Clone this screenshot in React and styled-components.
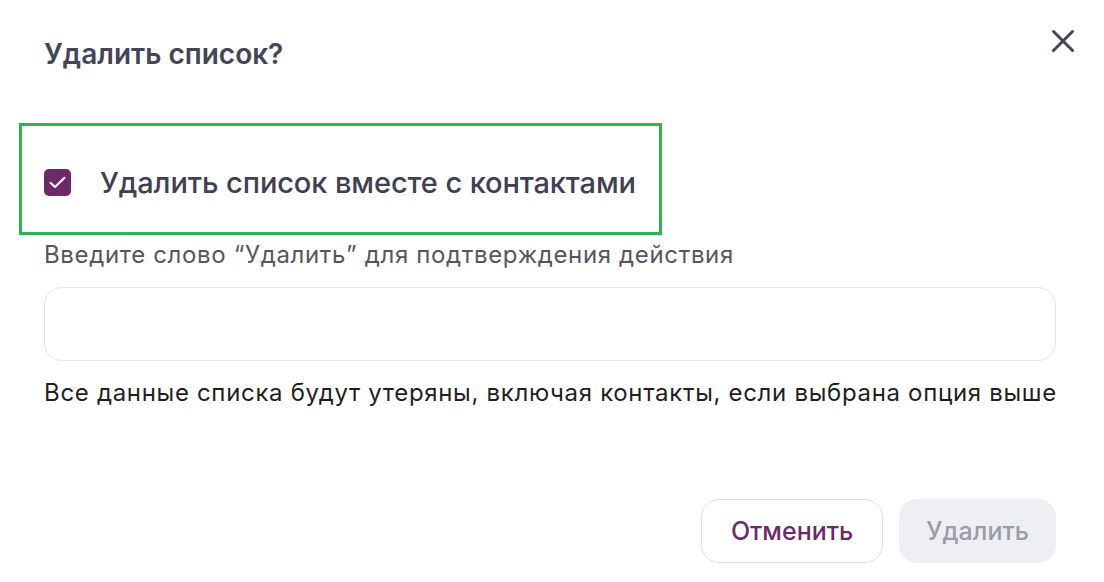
import React, {useState} from 'react'
import styled, {createGlobalStyle} from 'styled-components'

const GlobalStyle = createGlobalStyle`
  html, body {
    margin: 0;
    padding: 0;
    background: #fff;
  }
  body {
    font-family: Inter, "Noto Sans", sans-serif;
    -webkit-font-smoothing: antialiased;
  }
`

export default function App() {
  const [withContacts, setWithContacts] = useState(true)
  const [word, setWord] = useState('')

  return (
    <>
      <GlobalStyle />
      <Modal>
        <Header>
          <Title>Удалить список?</Title>
          <CloseButton aria-label="Закрыть">
            <svg width="24" height="24" viewBox="0 0 24 24" fill="none">
              <path
                d="M2.5 2.5L21.5 21.5M21.5 2.5L2.5 21.5"
                stroke="#454559"
                strokeWidth="3"
                strokeLinecap="round"
              />
            </svg>
          </CloseButton>
        </Header>

        <Highlight>
          <CheckRow onClick={() => setWithContacts(!withContacts)}>
            <Checkbox checked={withContacts}>
              {withContacts && (
                <svg width="17" height="13" viewBox="0 0 17 13" fill="none">
                  <path
                    d="M1.5 6.8L6 11L15.5 1.8"
                    stroke="#fff"
                    strokeWidth="2"
                    strokeLinecap="round"
                    strokeLinejoin="round"
                  />
                </svg>
              )}
            </Checkbox>
            <CheckLabel>Удалить список вместе с контактами</CheckLabel>
          </CheckRow>
        </Highlight>

        <Field>
          <FieldLabel>Введите слово “Удалить” для подтверждения действия</FieldLabel>
          <Input value={word} onChange={e => setWord(e.target.value)} />
          <Hint>
            Все данные списка будут утеряны, включая контакты, если выбрана
            опция выше
          </Hint>
        </Field>

        <Footer>
          <Button>Отменить</Button>
          <Button primary disabled={word !== 'Удалить'}>
            Удалить
          </Button>
        </Footer>
      </Modal>
    </>
  )
}

const Modal = styled.div`
  width: 1104px;
  height: 582px;
  box-sizing: border-box;
  padding: 28px 48px 19px 44px;
  display: flex;
  flex-direction: column;
`

const Header = styled.header`
  display: flex;
  justify-content: space-between;
  align-items: flex-start;
  height: 95px;
`

const Title = styled.h2`
  margin: 9px 0 0;
  font-size: 28px;
  line-height: 34px;
  font-weight: 600;
  color: #454559;
`

const CloseButton = styled.button`
  border: 0;
  background: none;
  padding: 0;
  margin: 1px -19px 0 0;
  width: 24px;
  height: 24px;
  cursor: pointer;
`

const Highlight = styled.div`
  margin-left: -25px;
  width: 643px;
  height: 112px;
  box-sizing: border-box;
  border: 3px solid #2fb550;
  display: flex;
  align-items: center;
  padding-left: 22px;
  padding-top: 7px;
`

const CheckRow = styled.label`
  display: flex;
  align-items: center;
  gap: 29px;
  cursor: pointer;
`

const Checkbox = styled.span`
  width: 27px;
  height: 27px;
  box-sizing: border-box;
  border-radius: 5px;
  background: ${props => (props.checked ? '#6c2a6b' : '#fff')};
  border: ${props => (props.checked ? 'none' : '1px solid #c8c8d0')};
  display: flex;
  align-items: center;
  justify-content: center;
`

const CheckLabel = styled.span`
  font-size: 29px;
  font-weight: 500;
  color: #3f4056;
  letter-spacing: -0.1px;
`

const Field = styled.div`
  display: flex;
  flex-direction: column;
  margin-top: 6px;
`

const FieldLabel = styled.div`
  font-size: 24px;
  line-height: 28px;
  letter-spacing: 0.65px;
  color: #56565f;
  margin-bottom: 18px;
`

const Input = styled.input`
  height: 74px;
  box-sizing: border-box;
  border: 1px solid #e4e4e8;
  border-radius: 18px;
  padding: 0 20px;
  font: inherit;
  font-size: 24px;
  outline: none;
`

const Hint = styled.div`
  margin-top: 18px;
  font-size: 24px;
  line-height: 28px;
  letter-spacing: 0.68px;
  color: #1f1f24;
  white-space: nowrap;
`

const Footer = styled.footer`
  margin-top: auto;
  display: flex;
  justify-content: flex-end;
  gap: 16px;
`

const Button = styled.button`
  height: 64px;
  box-sizing: border-box;
  padding: 0 ${props => (props.primary ? '27px' : '29px')};
  border-radius: 18px;
  font-family: inherit;
  font-size: 25px;
  font-weight: 500;
  border: ${props => (props.primary ? '0' : '1px solid #dedee3')};
  background: ${props => (props.primary ? '#eeeff2' : '#fff')};
  color: ${props => (props.primary ? '#9b9ca9' : '#6c2a6b')};
  cursor: pointer;

  &:disabled {
    cursor: default;
  }
`
